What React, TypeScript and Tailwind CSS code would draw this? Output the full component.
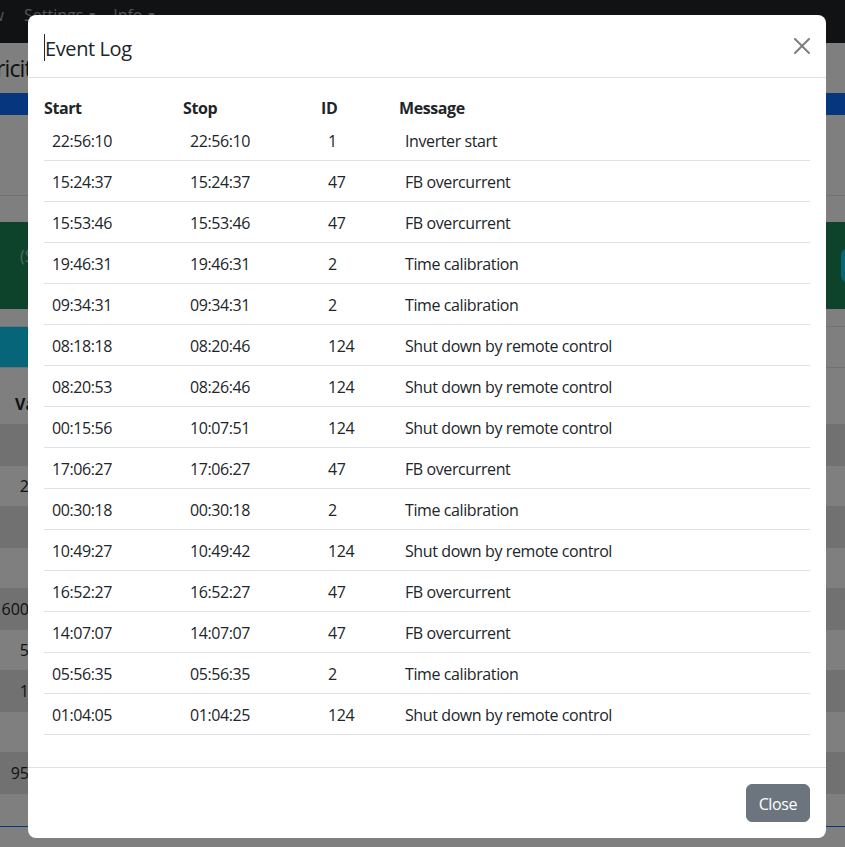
import React from "react";

type LogRow = { start: string; stop: string; id: number; message: string };

const rows: LogRow[] = [
  { start: "22:56:10", stop: "22:56:10", id: 1, message: "Inverter start" },
  { start: "15:24:37", stop: "15:24:37", id: 47, message: "FB overcurrent" },
  { start: "15:53:46", stop: "15:53:46", id: 47, message: "FB overcurrent" },
  { start: "19:46:31", stop: "19:46:31", id: 2, message: "Time calibration" },
  { start: "09:34:31", stop: "09:34:31", id: 2, message: "Time calibration" },
  { start: "08:18:18", stop: "08:20:46", id: 124, message: "Shut down by remote control" },
  { start: "08:20:53", stop: "08:26:46", id: 124, message: "Shut down by remote control" },
  { start: "00:15:56", stop: "10:07:51", id: 124, message: "Shut down by remote control" },
  { start: "17:06:27", stop: "17:06:27", id: 47, message: "FB overcurrent" },
  { start: "00:30:18", stop: "00:30:18", id: 2, message: "Time calibration" },
  { start: "10:49:27", stop: "10:49:42", id: 124, message: "Shut down by remote control" },
  { start: "16:52:27", stop: "16:52:27", id: 47, message: "FB overcurrent" },
  { start: "14:07:07", stop: "14:07:07", id: 47, message: "FB overcurrent" },
  { start: "05:56:35", stop: "05:56:35", id: 2, message: "Time calibration" },
  { start: "01:04:05", stop: "01:04:25", id: 124, message: "Shut down by remote control" },
];

// values of the page table behind the dialog, one per row
const pageValues: { value: string; striped: boolean }[] = [
  { value: "", striped: true },
  { value: "2", striped: false },
  { value: "", striped: true },
  { value: "", striped: false },
  { value: "600", striped: true },
  { value: "5", striped: false },
  { value: "1", striped: true },
  { value: "", striped: false },
  { value: "95", striped: true },
];

function PageBehind() {
  return (
    <div className="flex flex-col">
      <nav className="flex h-[43px] items-start gap-[16px] bg-[#212529] pt-[3px] text-[16px] leading-[24px] text-white/60">
        <span className="-ml-[31px]">View</span>
        <span className="ml-[4px] flex items-center gap-1">
          Settings <span className="text-[10px]">▼</span>
        </span>
        <span className="flex items-center gap-1">
          Info <span className="text-[10px]">▼</span>
        </span>
      </nav>
      <div className="h-[50px] pt-[10px]">
        <h2 className="-ml-[50px] text-[23px] leading-[30px] tracking-[-0.04em] text-[#212529]">Electricity meter</h2>
      </div>
      <div className="h-[22px] bg-[#0d6efd]" />
      <div className="h-[81px] border-b border-[#dee2e6]" />
      <div className="h-[26px]" />
      <div className="flex h-[87px] items-center justify-between bg-[#198754] pl-[20px] text-[16px] text-white/60">
        <span className="-mt-[20px]">(Stand-by)</span>
        <span className="mr-[-40px] h-[33px] w-[44px] rounded-[6px] bg-[#0dcaf0]" />
      </div>
      <div className="h-[17px]" />
      <div className="flex h-[42px] border-y border-[#dee2e6]">
        <div className="w-[240px] bg-[#0dcaf0]" />
      </div>
      <div className="flex h-[57px] items-end border-b border-[#dee2e6] pb-[8px] pl-[15px] text-[16px] font-bold leading-[24px] text-[#212529]">
        Value
      </div>
      {pageValues.map((v, i) => (
        <div
          key={i}
          className={`flex h-[41px] items-center border-b border-[#dee2e6] text-[16px] text-[#212529] ${
            v.striped ? "bg-[#e2e2e2]" : "bg-white"
          }`}
        >
          <span className="w-[29px] text-right">{v.value}</span>
        </div>
      ))}
      <div className="h-[33px] border-b border-[#0d6efd]" />
    </div>
  );
}

function CloseIcon() {
  return (
    <svg width="16" height="16" viewBox="0 0 16 16" className="opacity-50">
      <path
        fill="#000"
        d="M.293.293a1 1 0 0 1 1.414 0L8 6.586 14.293.293a1 1 0 1 1 1.414 1.414L9.414 8l6.293 6.293a1 1 0 0 1-1.414 1.414L8 9.414l-6.293 6.293a1 1 0 0 1-1.414-1.414L6.586 8 .293 1.707a1 1 0 0 1 0-1.414z"
      />
    </svg>
  );
}

function EventLogModal() {
  return (
    <div className="flex w-[798px] flex-col rounded-[8px] bg-white tracking-[-0.025em] text-[#212529]">
      <div className="flex items-center justify-between border-b border-[#dee2e6] p-[16px]">
        <h5 className="-mb-[3px] mt-[3px] flex items-center text-[20px] leading-[30px] font-normal">
          <span className="-mt-[4px] h-[27px] w-px bg-[#212529]" />
          Event Log
        </h5>
        <button type="button" className="-my-[8px] -mr-[4px] p-[4px]">
          <CloseIcon />
        </button>
      </div>

      <div className="p-[16px]">
        <div className="mb-[16px] text-[16px] leading-[24px]">
          <div className="grid h-[26px] grid-cols-[138px_138px_77px_1fr] pt-[2px] font-bold">
            <div>Start</div>
            <div className="pl-px">Stop</div>
            <div className="pl-px">ID</div>
            <div className="pl-[2px]">Message</div>
          </div>
          {rows.map((r, i) => (
            <div
              key={i}
              className="grid grid-cols-[138px_138px_77px_1fr] border-b border-[#dee2e6] [&>div]:px-[8px] [&>div]:pb-[7px] [&>div]:pt-[9px]"
            >
              <div>{r.start}</div>
              <div>{r.stop}</div>
              <div>{r.id}</div>
              <div>{r.message}</div>
            </div>
          ))}
        </div>
      </div>

      <div className="flex justify-end border-t border-[#dee2e6] p-[12px]">
        <button
          type="button"
          className="m-[4px] rounded-[6px] border border-[#6c757d] bg-[#6c757d] px-[12px] pb-[5px] pt-[7px] text-[16px] leading-[24px] text-white"
        >
          Close
        </button>
      </div>
    </div>
  );
}

export default function App() {
  return (
    <div className="relative h-[847px] overflow-hidden bg-white font-['Open_Sans','Noto_Sans',sans-serif]">
      <PageBehind />
      <div className="absolute inset-0 bg-black/50" />
      <div className="absolute inset-0 pl-[28px] pt-[15px]">
        <EventLogModal />
      </div>
    </div>
  );
}
